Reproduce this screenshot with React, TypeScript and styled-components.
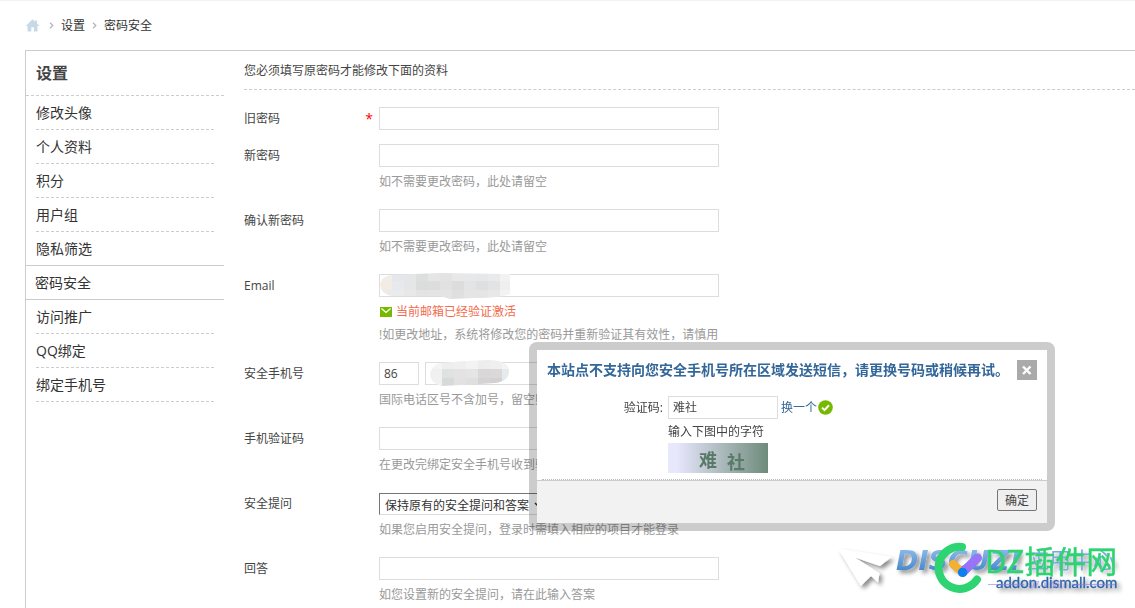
import React from "react";
import styled, { createGlobalStyle, css } from "styled-components";

const GlobalStyle = createGlobalStyle`
  * { box-sizing: border-box; }
  body {
    margin: 0;
    background: #fff;
    color: #444;
    font: 12px/23px "Open Sans", "Noto Sans CJK SC", sans-serif;
  }
  h1, h2, p, ul { margin: 0; padding: 0; }
  a { color: inherit; text-decoration: none; }
  input, select, button { font: inherit; color: inherit; }
`;

const Page = styled.div`
  border-top: 1px solid #f2f2f2;
  padding-left: 25px;
  overflow: hidden;
`;

const Breadcrumb = styled.nav`
  display: flex;
  align-items: center;
  gap: 7px;
  height: 49px;
  color: #333;
`;

const HomeLink = styled.a`
  display: flex;
  margin-right: 2px;
`;

const Panel = styled.div`
  display: flex;
  border: 1px solid #ccc;
  border-width: 1px 0 0 1px;
`;

const Sidebar = styled.aside`
  flex: 0 0 198px;
  padding-bottom: 20px;
`;

const SideTitle = styled.h2`
  height: 45px;
  padding-left: 10px;
  border-bottom: 1px dashed #ccc;
  font-size: 16px;
  line-height: 44px;
`;

const SideList = styled.ul`
  list-style: none;
`;

const SideItem = styled.li<{ $active?: boolean }>`
  height: 34px;
  margin: 0 10px;
  border-bottom: 1px dashed #ccc;
  color: #333;
  font-size: 14px;
  line-height: 33px;
  ${(p) =>
    p.$active &&
    css`
      height: 35px;
      margin: -1px 0 0;
      padding-left: 9px;
      border: 1px solid #ccc;
      border-width: 1px 0;
      background: #fff;
    `}
`;

const Main = styled.main`
  flex: 1;
  min-width: 0;
  padding-left: 20px;
`;

const Intro = styled.p`
  height: 39px;
  margin-bottom: 10px;
  border-bottom: 1px dashed #ccc;
  line-height: 40px;
`;

const Row = styled.div`
  display: grid;
  grid-template-columns: 135px minmax(0, 1fr);
  padding: 7px 0;
  &:last-child { padding-bottom: 0; }
`;

const LabelCell = styled.div`
  display: flex;
  justify-content: space-between;
  padding-right: 6px;
`;

const Required = styled.span`
  color: #f00;
  font-size: 14px;
`;

const Controls = styled.div`
  display: flex;
  align-items: flex-end;
  gap: 6px;
  height: 23px;
  position: relative;
`;

const widths = { full: 340, code: 40, phone: 294, captcha: 110 };

const TextInput = styled.input<{ $size?: keyof typeof widths }>`
  width: ${(p) => widths[p.$size ?? "full"]}px;
  height: 23px;
  padding: 0 4px;
  border: 1px solid #ddd;
  border-radius: 0;
  background: #fff;
  outline: none;
`;

const Select = styled.select`
  appearance: none;
  width: 170px;
  height: 22px;
  padding: 0 5px;
  border: 1px solid #767676;
  border-bottom-color: #ddd;
  border-radius: 0;
  background: #fff;
  color: #333;
`;

const SelectArrow = styled.svg`
  position: absolute;
  left: 155px;
  top: 10px;
  pointer-events: none;
`;

const Mosaic = styled.svg<{ $left: number }>`
  position: absolute;
  left: ${(p) => p.$left}px;
  top: -2px;
  pointer-events: none;
`;

const Hint = styled.div`
  padding: 3px 0 2px;
  color: #999;
`;

const Verified = styled.p`
  display: flex;
  align-items: center;
  gap: 4px;
  color: #f26c4f;
`;

const Dialog = styled.section`
  position: fixed;
  left: 529px;
  top: 342px;
  width: 526px;
  border: 8px solid rgba(0, 0, 0, 0.2);
  border-radius: 8px;
  background: #fff;
  background-clip: padding-box;
`;

const DialogHead = styled.header`
  display: flex;
  align-items: center;
  justify-content: space-between;
  padding: 10px 10px 0;
`;

const DialogTitle = styled.h1`
  color: #369;
  font-size: 14px;
  line-height: 20px;
`;

const CloseButton = styled.button`
  display: flex;
  width: 20px;
  height: 20px;
  padding: 0;
  border: 0;
  background: #aaa;
`;

const DialogBody = styled.div`
  display: grid;
  grid-template-columns: 126px 1fr;
  column-gap: 5px;
  padding: 16px 0 6px;
`;

const CaptchaLabel = styled.label`
  text-align: right;
`;

const CaptchaLine = styled.div`
  display: flex;
  align-items: center;
`;

const SwapLink = styled.a`
  margin: 0 1px 0 3px;
  color: #369;
`;

const CaptchaTip = styled.p`
  padding-top: 1px;
`;

const CaptchaImage = styled.svg`
  display: block;
`;

const DialogRule = styled.div`
  margin: 0 5px;
  border-top: 1px dotted #bbb;
`;

const DialogFoot = styled.footer`
  display: flex;
  justify-content: flex-end;
  align-items: flex-start;
  height: 43px;
  padding: 8px 10px 0;
  border-top: 1px solid #ccc;
  background: #f2f2f2;
`;

const OkButton = styled.button`
  width: 40px;
  height: 22px;
  padding: 1px 0 0;
  border: 1px solid #767676;
  border-radius: 2px;
  background: #efefef;
  line-height: 20px;
`;

const Watermark = styled.svg`
  position: fixed;
  right: 0;
  bottom: 0;
  pointer-events: none;
`;

const Chevron = () => (
  <svg width="5" height="7" viewBox="0 0 5 7" aria-hidden="true">
    <path d="M1 .8 3.8 3.5 1 6.2" fill="none" stroke="#b5b5b5" strokeWidth="1.2" />
  </svg>
);

const HomeIcon = () => (
  <svg width="15" height="13" viewBox="0 0 15 13" aria-hidden="true">
    <path d="M7.5.3 10 2.8V1.5h2v3.3L14.3 7h-1.8v5.5H9V8.2H6.3v4.3H2.6V7H.8z" fill="#c5d9e6" />
  </svg>
);

const MailIcon = () => (
  <svg width="13" height="10" viewBox="0 0 13 10" aria-hidden="true">
    <path d="M1 0h12v10H1z" fill="#76b900" />
    <path d="m2.5 1.5 4.5 4 4.5-4" fill="none" stroke="#fff" strokeWidth="1.3" />
  </svg>
);

const CheckIcon = () => (
  <svg width="15" height="15" viewBox="0 0 15 15" aria-hidden="true">
    <circle cx="7.5" cy="7.5" r="7.3" fill="#76b900" />
    <path d="m4 7.6 2.5 2.5L11 5.3" fill="none" stroke="#fff" strokeWidth="2" />
  </svg>
);

const emailTones = [
  ["#f1eeea", "#e4e8ec", "#e3e7e8", "#dddede", "#e5e5e6", "#e2e4e4", "#e8e8e9", "#e6e9ea", "#e6e7e8", "#e9eaea", "#f2f2f2"],
  ["#f3ece3", "#e7e9ec", "#e5e6e8", "#dcdcdc", "#dddddd", "#e2e1e1", "#dcdcdd", "#e2e4e5", "#dedfe0", "#e2e3e4", "#efefef"],
  ["#eceaea", "#e9ebed", "#e8e8e9", "#e3e3e3", "#e4e4e4", "#e5e4e4", "#dfdfdf", "#e5e5e5", "#e5e5e5", "#e8e8e8", "#f3f3f3"],
];

const phoneTones = [
  ["#f4f4f4", "#eeeeee", "#efefef", "#f3f3f3", "#ededed", "#efefef", "#f3f3f3"],
  ["#f0f0f0", "#dfe2e1", "#e3e3e3", "#e5e5e6", "#d9d7d7", "#dad8d8", "#e5eaee"],
  ["#f1f1f1", "#d8dad9", "#e3e1e1", "#dfdfdf", "#d6d3d3", "#d3d1d1", "#e3e8ec"],
];

function Redacted({ id, left, width, shape, tones }: {
  id: string; left: number; width: number; shape: string; tones: string[][];
}) {
  return (
    <Mosaic $left={left} width={width} height="27" aria-hidden="true">
      <clipPath id={id}><path d={shape} /></clipPath>
      <g clipPath={`url(#${id})`} shapeRendering="crispEdges">
        {tones.map((line, y) =>
          line.map((c, x) => <rect key={`${x}-${y}`} x={x * 12} y={y * 9} width="12" height="9" fill={c} />)
        )}
      </g>
    </Mosaic>
  );
}

const menu = ["修改头像", "个人资料", "积分", "用户组", "隐私筛选", "密码安全", "访问推广", "QQ绑定", "绑定手机号"];

function Field({ id, label, required, hint, children }: {
  id: string; label: string; required?: boolean; hint?: React.ReactNode; children?: React.ReactNode;
}) {
  return (
    <Row>
      <LabelCell>
        <label htmlFor={id}>{label}</label>
        {required && <Required>*</Required>}
      </LabelCell>
      <div>
        <Controls>{children ?? <TextInput id={id} type="password" />}</Controls>
        {hint && <Hint>{hint}</Hint>}
      </div>
    </Row>
  );
}

const SiteMark = () => (
  <Watermark width="300" height="68" viewBox="835 540 300 68" role="img" aria-label="DZ插件网">
    <defs>
      <linearGradient id="sky" x1="0" y1="0" x2="0" y2="1">
        <stop offset="0.2" stopColor="#85b5e6" />
        <stop offset="0.8" stopColor="#4a8acb" />
      </linearGradient>
      <filter id="shade" x="-10%" y="-20%" width="120%" height="160%">
        <feDropShadow dx="3" dy="3" stdDeviation="2" floodColor="#000" floodOpacity="0.45" />
      </filter>
    </defs>
    <g filter="url(#shade)">
      <path d="M838 548.5 891.5 557 880 566 855 557.5 879.5 573.3 878 582.5 871 576 860.8 586z" fill="#fff" />
      <text x="896" y="570" fontFamily="DejaVu Sans" fontSize="27" fontWeight="700" fontStyle="italic" fill="url(#sky)">DISCUZ!</text>
      <text x="1027" y="568" fontFamily="Noto Sans CJK SC" fontSize="22" fill="#7aabe0">应用中心</text>
      <text x="996" y="588" fontFamily="Lato" fontSize="15" fill="#2d66a5" stroke="#2d66a5" strokeWidth="0.3">addon.dismall.com</text>
    </g>
    <path d="M962 547A21 21 0 1 0 977 579.5" fill="none" stroke="#2dd471" strokeWidth="8" strokeLinecap="round" />
    <path d="m953 564 9.500 8.500" stroke="#f5b030" strokeWidth="8" strokeLinecap="round" />
    <path d="m963 572 14.500-14" stroke="#9a74f8" strokeWidth="9" strokeLinecap="round" />
    <circle cx="962.6" cy="572.4" r="4.700" fill="#0d7ff2" />
    <text x="985" y="573" fontFamily="Noto Sans CJK SC" fontSize="31" fill="#2dd471" stroke="#2dd471" strokeWidth="0.4">DZ插件网</text>
    <g opacity="0.6">
      <path d="M988 584.500h36M1072 584.500h43" stroke="#9a74f8" strokeWidth="1" />
      <text x="1028" y="588" fontFamily="Open Sans" fontSize="9" fill="#9a74f8">DZ-X.NET</text>
    </g>
  </Watermark>
);

export default function App() {
  return (
    <>
      <GlobalStyle />
      <Page>
        <Breadcrumb>
          <HomeLink href="#" aria-label="首页"><HomeIcon /></HomeLink>
          <Chevron />
          <a href="#">设置</a>
          <Chevron />
          <a href="#">密码安全</a>
        </Breadcrumb>
        <Panel>
          <Sidebar>
            <SideTitle>设置</SideTitle>
            <SideList>
              {menu.map((m) => (
                <SideItem key={m} $active={m === "密码安全"}><a href="#">{m}</a></SideItem>
              ))}
            </SideList>
          </Sidebar>
          <Main>
            <Intro>您必须填写原密码才能修改下面的资料</Intro>
            <form>
              <Field id="old" label="旧密码" required />
              <Field id="new" label="新密码" hint="如不需要更改密码，此处请留空" />
              <Field id="again" label="确认新密码" hint="如不需要更改密码，此处请留空" />
              <Field
                id="email"
                label="Email"
                hint={
                  <>
                    <Verified><MailIcon />当前邮箱已经验证激活</Verified>
                    <p>!如更改地址，系统将修改您的密码并重新验证其有效性，请慎用</p>
                  </>
                }
              >
                <TextInput id="email" type="email" />
                <Redacted
                  id="mail-shape" left={1} width={131} tones={emailTones}
                  shape="M10 3 60 1 130 2V22Q120 26 95 26L70 27 60 24H12Q1 22 0 13 1 5 10 3z"
                />
              </Field>
              <Field id="phone" label="安全手机号" hint="国际电话区号不含加号，留空则">
                <TextInput $size="code" aria-label="国际电话区号" defaultValue="86" />
                <TextInput $size="phone" id="phone" type="tel" />
                <Redacted
                  id="phone-shape" left={51} width={80} tones={phoneTones}
                  shape="M10 3 35 1 60 0Q79 1 79 11T65 23L50 24 12 26Q1 24 0 15 1 5 10 3z"
                />
              </Field>
              <Field id="sms" label="手机验证码" hint="在更改完绑定安全手机号收到验">
                <TextInput id="sms" />
              </Field>
              <Field id="question" label="安全提问" hint="如果您启用安全提问，登录时需填入相应的项目才能登录">
                <Select id="question"><option>保持原有的安全提问和答案</option></Select>
                <SelectArrow width="9" height="6" viewBox="0 0 9 6" aria-hidden="true">
                  <path d="m1 1 3.500 3.500L8 1" fill="none" stroke="#333" strokeWidth="1.500" />
                </SelectArrow>
              </Field>
              <Field id="answer" label="回答" hint="如您设置新的安全提问，请在此输入答案">
                <TextInput id="answer" />
              </Field>
            </form>
          </Main>
        </Panel>
      </Page>
      <Dialog role="dialog" aria-labelledby="dialog-title">
        <DialogHead>
          <DialogTitle id="dialog-title">本站点不支持向您安全手机号所在区域发送短信，请更换号码或稍候再试。</DialogTitle>
          <CloseButton type="button" aria-label="关闭">
            <svg width="20" height="20" viewBox="0 0 20 20" aria-hidden="true">
              <path d="m6 6.500 7.500 7.500M13.500 6.500 6 14" stroke="#fff" strokeWidth="2.400" />
            </svg>
          </CloseButton>
        </DialogHead>
        <DialogBody>
          <CaptchaLabel htmlFor="captcha">验证码:</CaptchaLabel>
          <div>
            <CaptchaLine>
              <TextInput $size="captcha" id="captcha" defaultValue="难社" />
              <SwapLink href="#">换一个</SwapLink>
              <CheckIcon />
            </CaptchaLine>
            <CaptchaTip>输入下图中的字符</CaptchaTip>
            <CaptchaImage width="100" height="30" viewBox="0 0 100 30">
              <defs>
                <linearGradient id="fade">
                  <stop offset="0.08" stopColor="#e8e8fd" />
                  <stop offset="1" stopColor="#6e8b7b" />
                </linearGradient>
              </defs>
              <path d="M0 0h100v30H0z" fill="url(#fade)" />
              <g fontFamily="Noto Sans CJK SC" fontSize="18" fontWeight="700" fill="#5a7a69">
                <text x="31" y="24">难</text>
                <text x="59" y="26">社</text>
              </g>
            </CaptchaImage>
          </div>
        </DialogBody>
        <DialogRule />
        <DialogFoot>
          <OkButton type="button">确定</OkButton>
        </DialogFoot>
      </Dialog>
      <SiteMark />
    </>
  );
}
